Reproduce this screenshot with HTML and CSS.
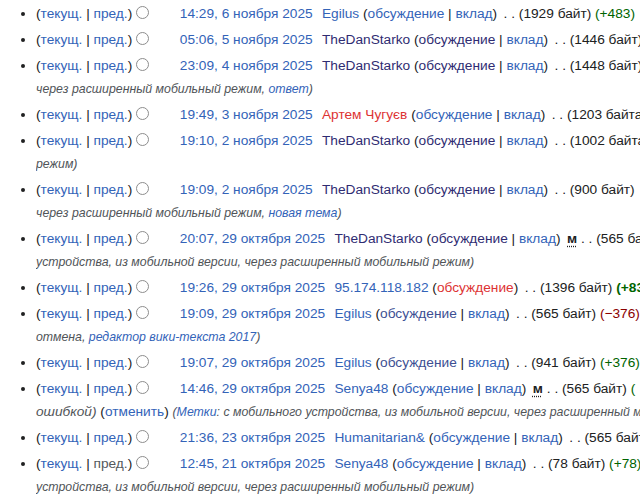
FILE: index.html
```html
<!DOCTYPE html>
<html lang="ru">
<head>
    <meta charset="UTF-8">
    <meta name="viewport" content="width=device-width, initial-scale=1.0">
    <title>История изменений</title>
    <link rel="stylesheet" href="styles.css">
</head>
<body>
    <ul id="pagehistory" class="history">
        <li>
            <div class="line">
                <span class="histlinks">(<a href="#">текущ.</a> | <a href="#">пред.</a>)</span>
                <span class="radio"></span><span class="radio hidden"></span>
                <a class="date" href="#">14:29, 6 ноября 2025</a>
                <span class="history-user"><a href="#">Egilus</a> <span class="tools">(<a href="#">обсуждение</a> | <a href="#">вклад</a>)</span></span>
                <span class="sep"></span>
                <span class="size">(1929 байт)</span>
                <span class="plus">(+483)</span>
            </div>
        </li>
        <li>
            <div class="line">
                <span class="histlinks">(<a href="#">текущ.</a> | <a href="#">пред.</a>)</span>
                <span class="radio"></span><span class="radio hidden"></span>
                <a class="date" href="#">05:06, 5 ноября 2025</a>
                <span class="history-user"><a class="visited" href="#">TheDanStarko</a> <span class="tools">(<a class="visited" href="#">обсуждение</a> | <a href="#">вклад</a>)</span></span>
                <span class="sep"></span>
                <span class="size">(1446 байт)</span>
            </div>
        </li>
        <li>
            <div class="line">
                <span class="histlinks">(<a href="#">текущ.</a> | <a href="#">пред.</a>)</span>
                <span class="radio"></span><span class="radio hidden"></span>
                <a class="date" href="#">23:09, 4 ноября 2025</a>
                <span class="history-user"><a class="visited" href="#">TheDanStarko</a> <span class="tools">(<a class="visited" href="#">обсуждение</a> | <a href="#">вклад</a>)</span></span>
                <span class="sep"></span>
                <span class="size">(1448 байт)</span>
            </div>
            <div class="line tail"><span class="tags">через расширенный мобильный режим, <a href="#">ответ</a>)</span></div>
        </li>
        <li>
            <div class="line">
                <span class="histlinks">(<a href="#">текущ.</a> | <a href="#">пред.</a>)</span>
                <span class="radio"></span><span class="radio hidden"></span>
                <a class="date" href="#">19:49, 3 ноября 2025</a>
                <span class="history-user"><a class="new" href="#">Артем Чугуєв</a> <span class="tools">(<a href="#">обсуждение</a> | <a href="#">вклад</a>)</span></span>
                <span class="sep"></span>
                <span class="size">(1203 байта)</span>
            </div>
        </li>
        <li>
            <div class="line">
                <span class="histlinks">(<a href="#">текущ.</a> | <a href="#">пред.</a>)</span>
                <span class="radio"></span><span class="radio hidden"></span>
                <a class="date" href="#">19:10, 2 ноября 2025</a>
                <span class="history-user"><a class="visited" href="#">TheDanStarko</a> <span class="tools">(<a class="visited" href="#">обсуждение</a> | <a href="#">вклад</a>)</span></span>
                <span class="sep"></span>
                <span class="size">(1002 байта)</span>
            </div>
            <div class="line tail"><span class="tags">режим)</span></div>
        </li>
        <li>
            <div class="line">
                <span class="histlinks">(<a href="#">текущ.</a> | <a href="#">пред.</a>)</span>
                <span class="radio"></span><span class="radio hidden"></span>
                <a class="date" href="#">19:09, 2 ноября 2025</a>
                <span class="history-user"><a class="visited" href="#">TheDanStarko</a> <span class="tools">(<a class="visited" href="#">обсуждение</a> | <a href="#">вклад</a>)</span></span>
                <span class="sep"></span>
                <span class="size">(900 байт)</span>
            </div>
            <div class="line tail"><span class="tags">через расширенный мобильный режим, <a href="#">новая тема</a>)</span></div>
        </li>
        <li>
            <div class="line">
                <span class="histlinks">(<a href="#">текущ.</a> | <a href="#">пред.</a>)</span>
                <span class="radio"></span><span class="radio hidden"></span>
                <a class="date" href="#">20:07, 29 октября 2025</a>
                <span class="history-user"><a class="visited" href="#">TheDanStarko</a> <span class="tools">(<a class="visited" href="#">обсуждение</a> | <a href="#">вклад</a>)</span></span>
                <abbr class="minor" title="Малое изменение">м</abbr>
                <span class="sep"></span>
                <span class="size">(565 байт)</span>
            </div>
            <div class="line tail"><span class="tags">устройства, из мобильной версии, через расширенный мобильный режим)</span></div>
        </li>
        <li>
            <div class="line">
                <span class="histlinks">(<a href="#">текущ.</a> | <a href="#">пред.</a>)</span>
                <span class="radio"></span><span class="radio hidden"></span>
                <a class="date" href="#">19:26, 29 октября 2025</a>
                <span class="history-user"><a href="#">95.174.118.182</a> <span class="tools">(<a class="new" href="#">обсуждение</a>)</span></span>
                <span class="sep"></span>
                <span class="size">(1396 байт)</span>
                <strong class="plus">(+831)</strong>
            </div>
        </li>
        <li>
            <div class="line">
                <span class="histlinks">(<a href="#">текущ.</a> | <a href="#">пред.</a>)</span>
                <span class="radio"></span><span class="radio hidden"></span>
                <a class="date" href="#">19:09, 29 октября 2025</a>
                <span class="history-user"><a href="#">Egilus</a> <span class="tools">(<a class="dim" href="#">обсуждение</a> | <a href="#">вклад</a>)</span></span>
                <span class="sep"></span>
                <span class="size">(565 байт)</span>
                <span class="minus">(−376)</span>
            </div>
            <div class="line tail"><span class="tags">отмена, <a href="#">редактор вики-текста 2017</a>)</span></div>
        </li>
        <li>
            <div class="line">
                <span class="histlinks">(<a href="#">текущ.</a> | <a href="#">пред.</a>)</span>
                <span class="radio"></span><span class="radio hidden"></span>
                <a class="date" href="#">19:07, 29 октября 2025</a>
                <span class="history-user"><a href="#">Egilus</a> <span class="tools">(<a class="dim" href="#">обсуждение</a> | <a href="#">вклад</a>)</span></span>
                <span class="sep"></span>
                <span class="size">(941 байт)</span>
                <span class="plus">(+376)</span>
            </div>
        </li>
        <li>
            <div class="line">
                <span class="histlinks">(<a href="#">текущ.</a> | <a href="#">пред.</a>)</span>
                <span class="radio"></span><span class="radio hidden"></span>
                <a class="date" href="#">14:46, 29 октября 2025</a>
                <span class="history-user"><a href="#">Senya48</a> <span class="tools">(<a href="#">обсуждение</a> | <a href="#">вклад</a>)</span></span>
                <abbr class="minor" title="Малое изменение">м</abbr>
                <span class="sep"></span>
                <span class="size">(565 байт)</span>
                <span class="plus">(</span>
            </div>
            <div class="line tail">ошибкой) <span class="undo">(<a href="#">отменить</a>)</span> <span class="tags">(<a href="#">Метки</a>: с мобильного устройства, из мобильной версии, через расширенный мобильный режим)</span></div>
        </li>
        <li>
            <div class="line">
                <span class="histlinks">(<a href="#">текущ.</a> | <a href="#">пред.</a>)</span>
                <span class="radio"></span><span class="radio hidden"></span>
                <a class="date" href="#">21:36, 23 октября 2025</a>
                <span class="history-user"><a href="#">Humanitarian&amp;</a> <span class="tools">(<a href="#">обсуждение</a> | <a href="#">вклад</a>)</span></span>
                <span class="sep"></span>
                <span class="size">(565 байт)</span>
            </div>
        </li>
        <li>
            <div class="line">
                <span class="histlinks">(<a href="#">текущ.</a> | <span class="off">пред.</span>)</span>
                <span class="radio"></span><span class="radio hidden"></span>
                <a class="date" href="#">12:45, 21 октября 2025</a>
                <span class="history-user"><a href="#">Senya48</a> <span class="tools">(<a href="#">обсуждение</a> | <a href="#">вклад</a>)</span></span>
                <span class="sep"></span>
                <span class="size">(78 байт)</span>
                <span class="plus">(+78)</span>
            </div>
            <div class="line tail"><span class="tags">устройства, из мобильной версии, через расширенный мобильный режим)</span></div>
        </li>
    </ul>
</body>
</html>
```

FILE: styles.css
```css
body {
    margin: 0;
    overflow: hidden;
    background-color: #fff;
    color: #202122;
    font-family: 'Liberation Sans', Arial, sans-serif;
    font-size: 13.7px;
    line-height: 23px;
}

a {
    color: #3363b8;
    text-decoration: none;
}

a.visited {
    color: #2f2c72;
}

a.dim {
    color: #3d4f93;
}

a.new {
    color: #d33;
}

.history {
    margin: 0;
    padding: 2px 0 0 36px;
    list-style: disc;
}

.history li {
    margin-bottom: 3px;
}

.line {
    white-space: nowrap;
    overflow: hidden;
}

/* wrapped end of the summary / tags */
.tail {
    font-style: italic;
    color: #505458;
}

.tail .undo {
    font-style: normal;
    color: #202122;
}

.tags {
    font-size: 90%;
    line-height: 1;
}

.radio {
    display: inline-block;
    width: 13px;
    height: 13px;
    box-sizing: border-box;
    border: 1px solid #8d8d8d;
    border-radius: 50%;
    vertical-align: -1px;
}

.radio.hidden {
    visibility: hidden;
    margin-left: 14px;
}

.off {
    color: #54595d;
}

.history-user {
    margin-left: 0.4em;
    margin-right: 0.2em;
}

.minor {
    font-weight: bold;
    text-decoration: underline dotted;
    text-underline-offset: 3px;
}

.sep::before {
    content: '. .';
}

.plus {
    color: #006400;
}

.minus {
    color: #8b0000;
}
```
